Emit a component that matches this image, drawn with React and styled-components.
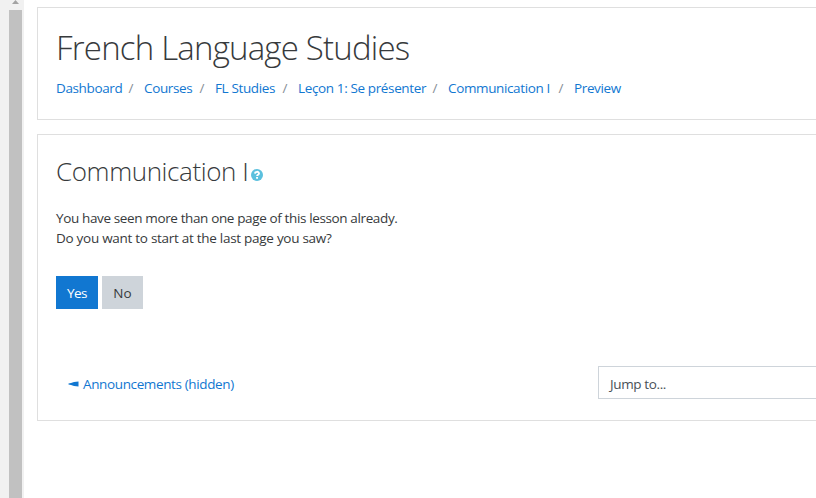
import React from 'react';
import styled, { createGlobalStyle } from 'styled-components';

const Global = createGlobalStyle`
  * { box-sizing: border-box; }
  body {
    margin: 0;
    background: #fff;
    overflow: hidden;
    font-family: "Open Sans", "Noto Sans", sans-serif;
    font-size: 13.5px;
    letter-spacing: -0.37px;
    line-height: 20px;
    color: #373a3c;
  }
`;

const Page = styled.div`
  display: flex;
  height: 498px;
  overflow: hidden;
`;

const Scrollbar = styled.div`
  width: 24px;
  flex: none;
  display: flex;
  flex-direction: column;
  padding-left: 9px;
  background: #f1f1f1;
`;

const ScrollArrow = styled.svg`
  display: block;
  width: 13px;
  height: 10px;
  flex: none;
`;

const ScrollThumb = styled.div`
  width: 13px;
  flex: 1;
  background: #c1c1c1;
`;

const Content = styled.main`
  flex: 1;
  min-width: 0;
  padding: 7px 0 0 13px;
  display: flex;
  flex-direction: column;
  gap: 14px;
`;

const Card = styled.section`
  width: 900px;
  height: ${(p) => p.$height}px;
  border: 1px solid #dfdfdf;
  padding: 0 18px;
`;

const Title = styled.h1`
  margin: 19px 0 0;
  font-size: 33px;
  line-height: 42px;
  font-weight: 300;
  letter-spacing: -0.8px;
  white-space: nowrap;
`;

const Crumbs = styled.nav`
  display: flex;
  margin-top: 9px;
`;

const Crumb = styled.span`
  display: flex;
  justify-content: space-between;
  width: ${(p) => p.$width}px;
  margin-right: 11px;
  white-space: nowrap;
`;

const Slash = styled.span`
  color: #868e96;
`;

const Link = styled.a`
  color: #1177d1;
  white-space: nowrap;
`;

const Subtitle = styled.h2`
  margin: 18px 0 0;
  display: flex;
  align-items: center;
  font-size: 26px;
  line-height: 36px;
  font-weight: 300;
  letter-spacing: -0.4px;
`;

const HelpIcon = styled.svg`
  width: 12px;
  height: 12px;
  margin: 7px 0 0 2px;
`;

const Message = styled.p`
  margin: 19px 0 0;
`;

const Question = styled.span`
  letter-spacing: -0.28px;
`;

const Actions = styled.div`
  display: flex;
  gap: 4px;
  margin-top: 28px;
`;

const Button = styled.button`
  width: ${(p) => (p.$primary ? 42 : 41)}px;
  height: 33px;
  padding: 0;
  border: 0;
  font: inherit;
  letter-spacing: ${(p) => (p.$primary ? '-0.5px' : '0')};
  color: ${(p) => (p.$primary ? '#fff' : '#373a3c')};
  background: ${(p) => (p.$primary ? '#1177d1' : '#ced4da')};
`;

const Footer = styled.footer`
  display: flex;
  justify-content: space-between;
  align-items: center;
  margin-top: 57px;
  padding-left: 12px;
`;

const PreviousLink = styled(Link)`
  display: flex;
  align-items: center;
  gap: 4px;
  padding-top: 2px;
`;

const PreviousIcon = styled.svg`
  width: 11px;
  height: 6px;
`;

const JumpMenu = styled.div`
  width: 320px;
  height: 33px;
  padding: 7px 11px;
  border: 1px solid #ced4da;
  color: #495057;
`;

const crumbs = [
  ['Dashboard', 77],
  ['Courses', 60],
  ['FL Studies', 72],
  ['Leçon 1: Se présenter', 139],
  ['Communication I', 115],
  ['Preview', 50],
];

export default function App() {
  return (
    <Page>
      <Global />
      <Scrollbar>
        <ScrollArrow viewBox="0 0 13 10"><path d="M3 4L6.5 0L10 4Z" fill="#a3a3a3" /></ScrollArrow>
        <ScrollThumb />
      </Scrollbar>
      <Content>
        <Card $height={113}>
          <Title>French Language Studies</Title>
          <Crumbs>
            {crumbs.map(([label, width], i) => (
              <Crumb key={label} $width={width}>
                <Link>{label}</Link>
                {i < crumbs.length - 1 && <Slash>/</Slash>}
              </Crumb>
            ))}
          </Crumbs>
        </Card>
        <Card $height={287}>
          <Subtitle>
            Communication I
            <HelpIcon viewBox="0 0 12 12">
              <circle cx="6" cy="6" r="6" fill="#5bc0de" />
              <path d="M4 4.6C4.1 2.3 8 2.2 8 4.5C8 5.8 6.1 5.7 6.1 7.1" fill="none" stroke="#fff" strokeWidth="1.9" />
              <path d="M5.1 8h1.9v1.8H5.1z" fill="#fff" />
            </HelpIcon>
          </Subtitle>
          <Message>
            You have seen more than one page of this lesson already.<br />
            <Question>Do you want to start at the last page you saw?</Question>
          </Message>
          <Actions>
            <Button $primary>Yes</Button>
            <Button>No</Button>
          </Actions>
          <Footer>
            <PreviousLink>
              <PreviousIcon viewBox="0 0 11 6"><path d="M0.5 2.5L3 2L6 1L10.5 0.5V5.5L6 5L3 4L0.5 3.5Z" fill="#1177d1" /></PreviousIcon>
              Announcements (hidden)
            </PreviousLink>
            <JumpMenu>Jump to...</JumpMenu>
          </Footer>
        </Card>
      </Content>
    </Page>
  );
}
